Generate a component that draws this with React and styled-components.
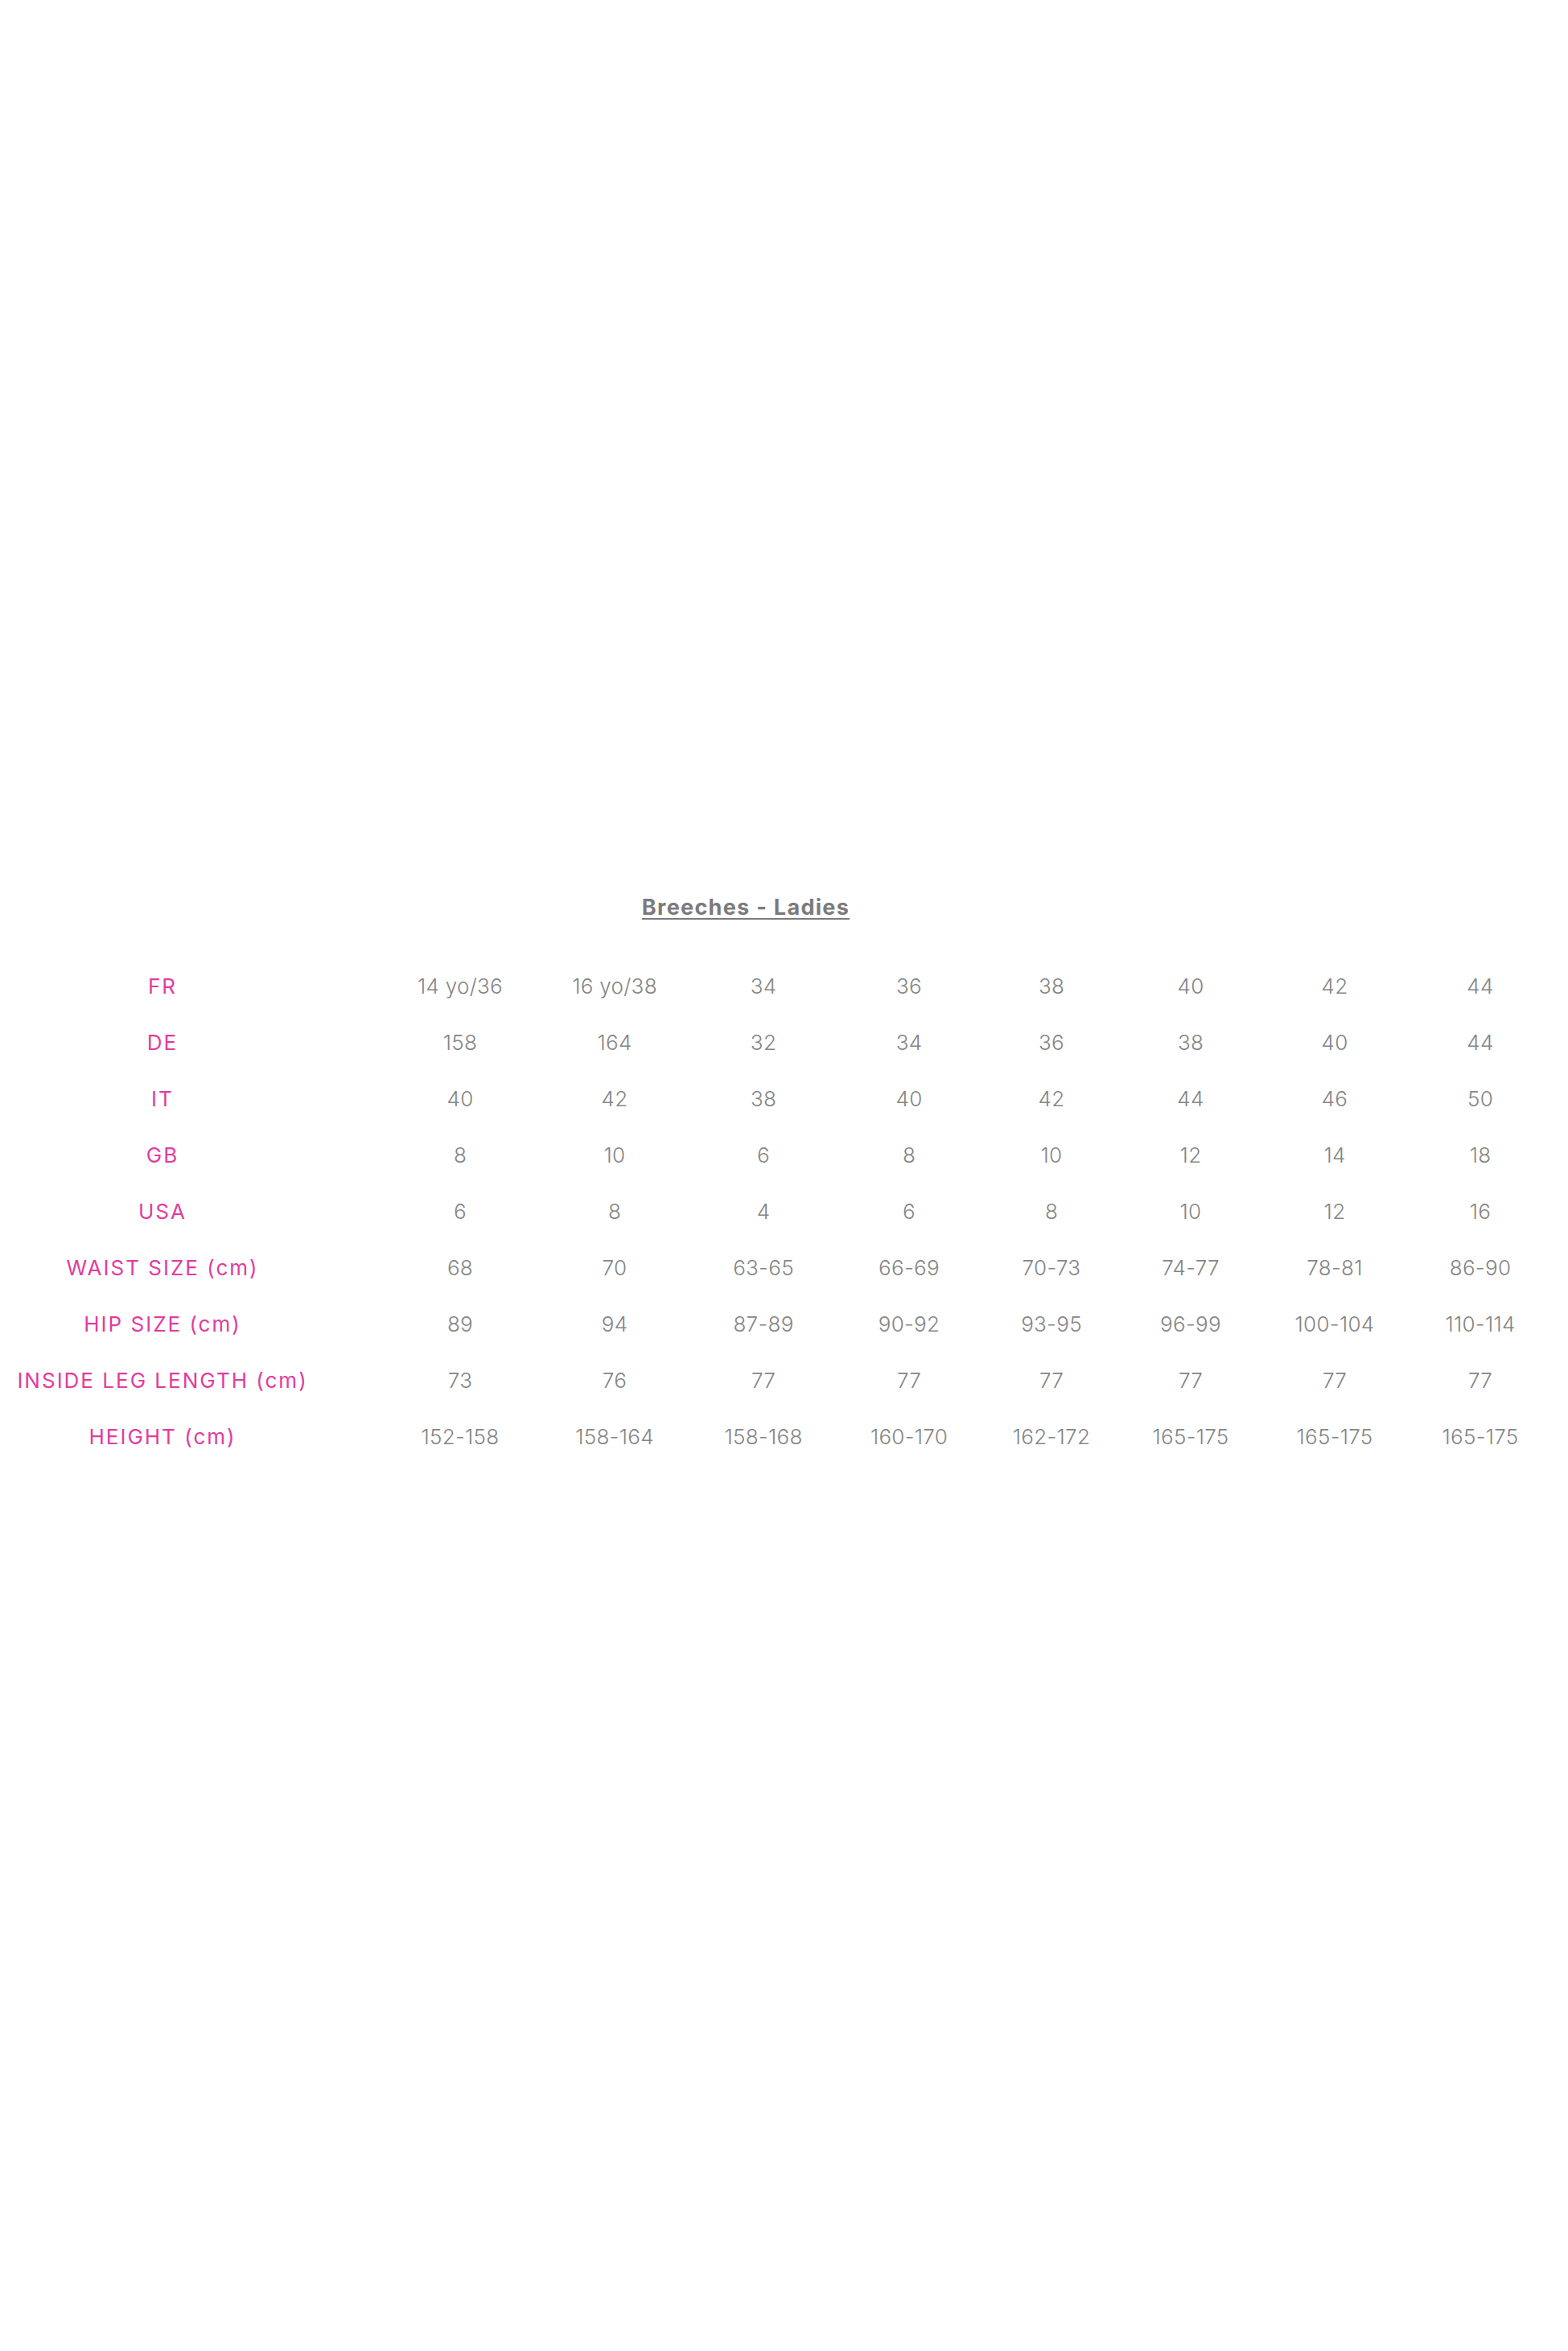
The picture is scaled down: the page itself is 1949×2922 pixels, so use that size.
import styled, { createGlobalStyle } from 'styled-components';

const GlobalStyle = createGlobalStyle`
  html, body {
    margin: 0;
    padding: 0;
    background: #ffffff;
  }
  body {
    font-family: Inter, "Noto Sans", sans-serif;
  }
`;

const Page = styled.div`
  min-height: 2922px;
  padding-top: 1111px;
  box-sizing: border-box;
`;

const Title = styled.h2`
  width: 1854px;
  margin: 0 0 45px;
  text-align: center;
  font-size: 27px;
  line-height: 34px;
  font-weight: 700;
  letter-spacing: 1.3px;
  color: #7b7b7b;
  text-decoration: underline;
  text-underline-offset: 4px;
  text-decoration-thickness: 2px;
`;

const Grid = styled.div`
  display: grid;
  grid-template-columns: 476px 192px 192px 178px 184px 170px 176px 182px 180px;
  grid-auto-rows: 70px;
  align-items: center;
`;

const Label = styled.div`
  padding-right: 72px;
  text-align: center;
  font-size: 26px;
  font-weight: 400;
  letter-spacing: 2px;
  color: #e23c9d;
  white-space: nowrap;
`;

const Cell = styled.div`
  text-align: center;
  font-size: 26px;
  font-weight: 300;
  letter-spacing: 0.3px;
  color: #858585;
  white-space: nowrap;
`;

const rows = [
  ['FR', '14 yo/36', '16 yo/38', '34', '36', '38', '40', '42', '44'],
  ['DE', '158', '164', '32', '34', '36', '38', '40', '44'],
  ['IT', '40', '42', '38', '40', '42', '44', '46', '50'],
  ['GB', '8', '10', '6', '8', '10', '12', '14', '18'],
  ['USA', '6', '8', '4', '6', '8', '10', '12', '16'],
  ['WAIST SIZE (cm)', '68', '70', '63-65', '66-69', '70-73', '74-77', '78-81', '86-90'],
  ['HIP SIZE (cm)', '89', '94', '87-89', '90-92', '93-95', '96-99', '100-104', '110-114'],
  ['INSIDE LEG LENGTH (cm)', '73', '76', '77', '77', '77', '77', '77', '77'],
  ['HEIGHT (cm)', '152-158', '158-164', '158-168', '160-170', '162-172', '165-175', '165-175', '165-175'],
];

function App() {
  return (
    <>
      <GlobalStyle />
      <Page>
        <Title>Breeches - Ladies</Title>
        <Grid>
          {rows.map(([label, ...values]) => [
            <Label key={label}>{label}</Label>,
            ...values.map((v, i) => <Cell key={label + i}>{v}</Cell>),
          ])}
        </Grid>
      </Page>
    </>
  );
}

export default App;
